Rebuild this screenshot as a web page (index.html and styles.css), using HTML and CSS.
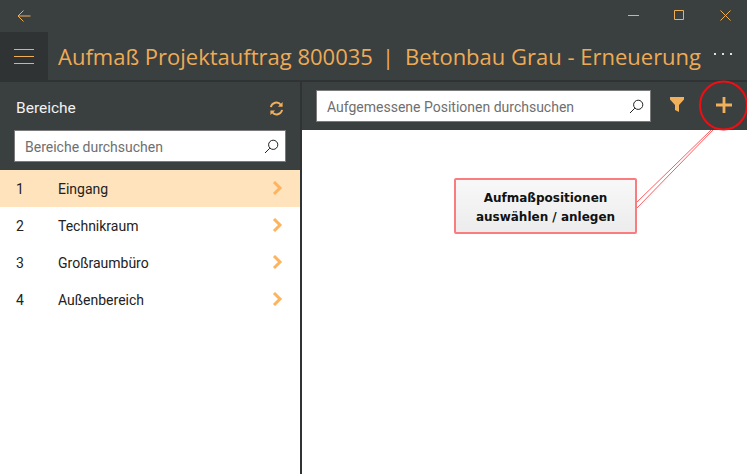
FILE: index.html
```html
<!DOCTYPE html>
<html lang="de">
<head>
<meta charset="utf-8">
<title>Aufmaß</title>
<link rel="stylesheet" href="styles.css">
</head>
<body>
<div class="app">
  <div class="titlebar">
    <button class="back" aria-label="Zurück">
      <svg width="14" height="12" viewBox="0 0 14 12"><path d="M6.500.5 1 6l5.500 5.500M1 6h12.500" class="line"/></svg>
    </button>
    <div class="winctl">
      <svg width="11" height="11" viewBox="0 0 11 11"><path d="M0 5.500h11" class="line"/></svg>
      <svg width="11" height="11" viewBox="0 0 11 11"><path d="M.5.500h9v9h-9z" class="line"/></svg>
      <svg width="11" height="11" viewBox="0 0 11 11"><path d="M.5.500l10 10M10.500.500l-10 10" class="line"/></svg>
    </div>
  </div>
  <header class="header">
    <button class="burger" aria-label="Menü"><span></span><span></span><span></span></button>
    <h1 class="title">Aufmaß Projektauftrag 800035<span class="sep">|</span>Betonbau Grau - Erneuerung</h1>
    <div class="more"><i></i><i></i><i></i></div>
  </header>
  <main class="body">
    <aside class="side">
      <div class="side-head">
        <div class="side-title">
          <span>Bereiche</span>
          <svg width="15" height="15" viewBox="0 0 16 16"><path d="M2 6.500A6 6 0 0 1 12.600 4M14 9.500A6 6 0 0 1 3.400 12" class="thick"/><path d="M14.500 1v5h-5zM1.500 15v-5h5z" class="fill"/></svg>
        </div>
        <div class="search">
          <span class="ph">Bereiche durchsuchen</span>
          <svg class="lens" width="15" height="15" viewBox="0 0 15 15"><circle cx="9.200" cy="5.800" r="4.600"/><path d="M5.800 9.200 1 14"/></svg>
        </div>
      </div>
      <ul class="list">
        <li class="row active"><span class="num">1</span><span class="name">Eingang</span><svg class="go" width="12" height="14" viewBox="0 0 12 14"><path d="M2 1l6 6-6 6" class="chev"/></svg></li>
        <li class="row"><span class="num">2</span><span class="name">Technikraum</span><svg class="go" width="12" height="14" viewBox="0 0 12 14"><path d="M2 1l6 6-6 6" class="chev"/></svg></li>
        <li class="row"><span class="num">3</span><span class="name">Großraumbüro</span><svg class="go" width="12" height="14" viewBox="0 0 12 14"><path d="M2 1l6 6-6 6" class="chev"/></svg></li>
        <li class="row"><span class="num">4</span><span class="name">Außenbereich</span><svg class="go" width="12" height="14" viewBox="0 0 12 14"><path d="M2 1l6 6-6 6" class="chev"/></svg></li>
      </ul>
    </aside>
    <section class="content">
      <div class="toolbar">
        <div class="search wide">
          <span class="ph">Aufgemessene Positionen durchsuchen</span>
          <svg class="lens" width="15" height="15" viewBox="0 0 15 15"><circle cx="9.200" cy="5.800" r="4.600"/><path d="M5.800 9.200 1 14"/></svg>
        </div>
        <svg class="funnel" width="14" height="15" viewBox="0 0 14 15"><path d="M0 0h14v2.500L9 8v7L5 13V8L0 2.500z" class="fill"/></svg>
        <svg class="plus" width="16" height="16" viewBox="0 0 17 17"><path d="M7 0h3v7h7v3h-7v7H7v-7H0V7h7z" class="fill"/></svg>
      </div>
    </section>
  </main>
  <svg class="marks" width="747" height="474" viewBox="0 0 747 474">
    <ellipse cx="723.500" cy="105.500" rx="23.500" ry="24" class="ring"/>
    <path d="M636 203 711 130M636 209 713 130" class="leader"/>
  </svg>
  <div class="callout">Aufmaßpositionen<br>auswählen / anlegen</div>
</div>
</body>
</html>
```

FILE: styles.css
```css
* { box-sizing: border-box; }
html, body { margin: 0; padding: 0; }
body { font-family: Roboto, "Liberation Sans", sans-serif; background: #fff; }
.app { position: relative; width: 747px; height: 474px; overflow: hidden; display: flex; flex-direction: column; background: #3a3f40; }
button { border: 0; background: none; padding: 0; margin: 0; }
.line { fill: none; stroke: #f0ae57; stroke-width: 1; }
.fill { fill: #f3b05a; }
.thick { fill: none; stroke: #f3b05a; stroke-width: 2; }
.chev { fill: none; stroke: #fdb45f; stroke-width: 3; }

.titlebar { height: 32px; display: flex; justify-content: space-between; align-items: center; padding: 0 16px 0 17px; }
.back { display: flex; height: 12px; margin-top: -1px; }
.winctl { display: flex; gap: 35px; margin-top: -1px; }

.header { height: 48px; display: flex; align-items: center; }
.burger { width: 48px; height: 48px; background: #2f3334; display: flex; flex-direction: column; justify-content: center; gap: 6px; padding: 0 14px; }
.burger span { display: block; height: 1px; width: 20px; background: #f0ae57; }
.title { margin: 0 0 0 10px; font-family: "Open Sans", sans-serif; font-size: 22px; font-weight: 400; color: #eeab55; white-space: nowrap; flex: 1; }
.sep { margin: 0 11px 0 9px; }
.more { display: flex; gap: 6px; padding-right: 15px; margin-top: -5px; }
.more i { width: 2px; height: 2px; background: #e0e0e0; }

.body { flex: 1; display: flex; border-top: 2px solid #2f3334; min-height: 0; }
.side { width: 300px; flex: none; background: #fff; display: flex; flex-direction: column; }
.side-head { height: 88px; background: #3a3f40; padding: 16px 14px 0; }
.side-title { display: flex; justify-content: space-between; align-items: center; color: #f2f2f2; font-size: 15.500px; padding: 0 2px; height: 20px; margin-bottom: 12px; }
.search { height: 32px; background: #fff; border: 1px solid #7a7a7a; display: flex; align-items: center; justify-content: space-between; padding: 2px 6px 0 10px; }
.ph { font-size: 14px; color: #6f6f6f; white-space: nowrap; }
.lens { fill: none; stroke: #222; stroke-width: 1; margin-top: -2px; }

.list { list-style: none; margin: 0; padding: 0; }
.row { height: 37px; display: flex; align-items: center; padding: 0 16px; font-size: 14px; color: #222; }
.row.active { background: #fee3bd; }
.num { width: 42px; }
.name { flex: 1; }
.go { margin-top: -2px; }

.content { flex: 1; min-width: 0; border-left: 2px solid #2f3334; background: #fff; }
.toolbar { height: 48px; background: #3a3f40; display: flex; align-items: center; padding: 0 0 0 14px; }
.wide { width: 335px; flex: none; }
.funnel { flex: none; margin: -4px 0 0 19px; }
.plus { flex: none; margin: -2px 0 0 32px; }

.marks { position: absolute; left: 0; top: 0; pointer-events: none; }
.ring { fill: none; stroke: #ee0f14; stroke-width: 2; }
.leader { fill: none; stroke: #ff5c60; stroke-width: 1; }
.callout { position: absolute; left: 454px; top: 178px; width: 183px; height: 56px; border: 2px solid #fb7b7f; border-radius: 2px; background: linear-gradient(#f8f8f8, #ececec); color: #111; font-family: "DejaVu Sans", sans-serif; font-weight: 700; font-size: 12px; line-height: 19px; text-align: center; padding-top: 9px; }
```
